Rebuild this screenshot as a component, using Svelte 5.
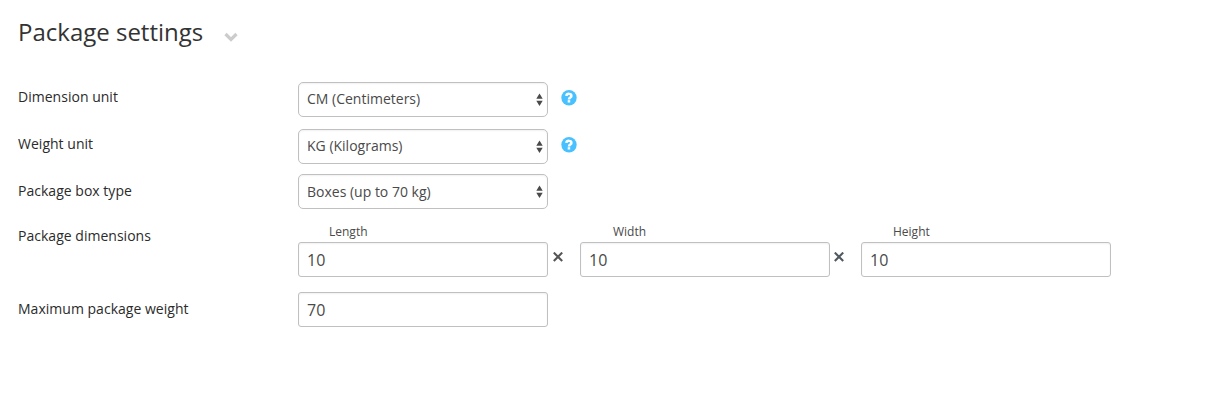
<script>
  const rows = [
    { label: 'Dimension unit', value: 'CM (Centimeters)', help: true },
    { label: 'Weight unit', value: 'KG (Kilograms)', help: true },
    { label: 'Package box type', value: 'Boxes (up to 70 kg)', help: false }
  ];
  const dims = ['Length', 'Width', 'Height'];
</script>

<main>
  <header>
    <h1>Package settings</h1>
    <svg class="chev" width="14" height="10" viewBox="0 0 14 10"><path d="M1.500 2 7 7.500l5.500-5.500" fill="none" stroke="#ccc" stroke-width="3.200" /></svg>
  </header>
  {#each rows as r, i}
    <div class="row r{i}">
      <div class="label">{r.label}</div>
      <div class="box select">
        <span>{r.value}</span>
        <svg width="7" height="13" viewBox="0 0 7 13"><path d="M3.500 .5 6.700 5.700H.3zM3.500 13 6.700 7.800H.3z" fill="#4a4a4a" /></svg>
      </div>
      {#if r.help}
        <svg class="help" width="16" height="16" viewBox="0 0 16 16">
          <circle cx="8" cy="7.700" r="7.700" fill="#4ac1ff" />
          <path d="M5.300 5.900C5.700 3.100 10.400 3.300 10.400 5.900 10.400 7.600 8 7.400 8 9.400" fill="none" stroke="#fff" stroke-width="2.500" />
          <path d="M6.700 10.200h2.500v2.300H6.700z" fill="#fff" />
        </svg>
      {/if}
    </div>
  {/each}
  <div class="row dims">
    <div class="label">Package dimensions</div>
    {#each dims as d, i}
      {#if i > 0}
        <div class="times t{i}"><svg width="10" height="10" viewBox="0 0 10 10"><path d="m.8 .6 8.400 8.400M9.200 .6 .8 9" fill="none" stroke="currentColor" stroke-width="2.100" /></svg></div>
      {/if}
      <div class="dim">
        <div class="cap c{i}">{d}</div>
        <div class="box">10</div>
      </div>
    {/each}
  </div>
  <div class="row max">
    <div class="label">Maximum package weight</div>
    <div class="box">70</div>
  </div>
</main>

<style>
  :global(body) { background: #fff; }
  main { font-family: "Open Sans", sans-serif; font-size: 14px; color: #333; padding: 14px 0 0 18px; height: 402px; box-sizing: border-box; overflow: hidden; }
  header { display: flex; align-items: center; height: 36px; margin-bottom: 32px; }
  h1 { margin: 0; font-size: 24px; line-height: 36px; font-weight: 400; }
  .chev { margin: 10px 0 0 21px; }
  .row { display: flex; align-items: flex-start; height: 47px; }
  .r1 { height: 45px; }
  .r2 { height: 50px; }
  .label { width: 280px; flex: none; line-height: 20px; padding-top: 5px; color: #2b2b2b; letter-spacing: 0.02px; }
  .r2 .label { padding-top: 7px; }
  .box { box-sizing: border-box; width: 250px; height: 35px; flex: none; border: 1px solid #c0c0c0; border-radius: 3px; padding: 1px 8px 0; line-height: 33px; font-size: 16px; color: #4a4a4a; background: #fff; box-shadow: inset 0 1px 2px rgba(0, 0, 0, 0.06); }
  .select { display: flex; align-items: center; justify-content: space-between; font-size: 14px; padding: 0 4px 0 8px; border-radius: 5px; }
  .select span { line-height: 31px; padding-bottom: 2px; }
  .r2 .select span { line-height: 33px; padding: 0; }
  .help { margin: 8px 0 0 13px; }
  .dims { height: 68px; }
  .dims .label { padding-top: 2px; }
  .cap { height: 18px; line-height: 16px; font-size: 12px; padding-left: 31px; color: #4a4a4a; }
  .c1 { padding-left: 33px; }
  .c2 { padding-left: 32px; }
  .times { width: 32px; box-sizing: border-box; padding: 28px 0 0 4.500px; line-height: 0; color: #555; }
  .t2 { width: 31px; padding-left: 4px; color: #505860; }
  .max .label { padding-top: 7px; }
</style>
